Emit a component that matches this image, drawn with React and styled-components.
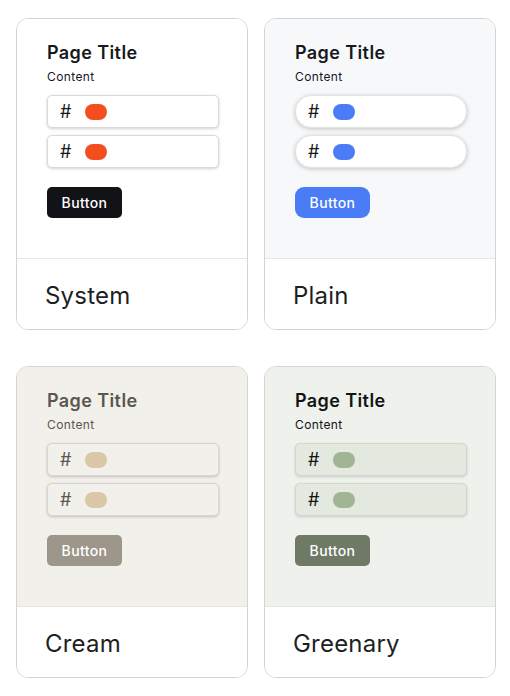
import React from "react";
import styled, { createGlobalStyle } from "styled-components";

const GlobalStyle = createGlobalStyle`
  body {
    margin: 0;
    background: #fff;
    font-family: Inter, "Noto Sans", sans-serif;
  }
`;

const themes = [
  {
    name: "System",
    bg: "#ffffff",
    text: "#16181c",
    inputBg: "#ffffff",
    inputBorder: "#d9d9d9",
    inputRadius: "5px",
    inputShadow: "0 1px 3px rgba(0, 0, 0, 0.18)",
    pill: "#f54e1e",
    button: "#111317",
    buttonRadius: "5px",
  },
  {
    name: "Plain",
    bg: "#f6f8fa",
    text: "#16181c",
    inputBg: "#ffffff",
    inputBorder: "#e4e4e4",
    inputRadius: "16px",
    inputShadow: "0 1px 4px rgba(0, 0, 0, 0.22)",
    pill: "#4a7cf6",
    button: "#4a7cf6",
    buttonRadius: "9px",
  },
  {
    name: "Cream",
    bg: "#f2f0eb",
    text: "#5a5650",
    inputBg: "#f2f0eb",
    inputBorder: "#d8d5cf",
    inputRadius: "5px",
    inputShadow: "0 1px 3px rgba(0, 0, 0, 0.2)",
    pill: "#d9c8a8",
    button: "#9d978b",
    buttonRadius: "5px",
  },
  {
    name: "Greenary",
    bg: "#eef1ec",
    text: "#121412",
    inputBg: "#e3e9df",
    inputBorder: "#d1d8cc",
    inputRadius: "5px",
    inputShadow: "0 1px 3px rgba(0, 0, 0, 0.16)",
    pill: "#a0b596",
    button: "#6e7a66",
    buttonRadius: "5px",
  },
];

const Grid = styled.div`
  display: grid;
  grid-template-columns: 232px 232px;
  column-gap: 16px;
  row-gap: 36px;
  padding: 18px 16px;
`;

const Card = styled.div`
  display: flex;
  flex-direction: column;
  height: 312px;
  box-sizing: border-box;
  border: 1px solid #d4d4d4;
  border-radius: 12px;
  overflow: hidden;
  background: #fff;
`;

const Preview = styled.div`
  height: 239px;
  box-sizing: border-box;
  padding: 23px 30px 0 30px;
  background: ${(p) => p.$t.bg};
  color: ${(p) => p.$t.text};
`;

const Title = styled.div`
  font-size: 18px;
  font-weight: 600;
  line-height: 22px;
  letter-spacing: 0.4px;
`;

const Content = styled.div`
  font-size: 12px;
  line-height: 16px;
  margin-top: 5px;
  letter-spacing: 0.4px;
`;

const Inputs = styled.div`
  display: flex;
  flex-direction: column;
  gap: 7px;
  margin-top: 10px;
`;

const Input = styled.div`
  display: flex;
  align-items: center;
  height: 33px;
  width: 172px;
  box-sizing: border-box;
  padding-left: 12px;
  gap: 14px;
  background: ${(p) => p.$t.inputBg};
  border: 1px solid ${(p) => p.$t.inputBorder};
  border-radius: ${(p) => p.$t.inputRadius};
  box-shadow: ${(p) => p.$t.inputShadow};
`;

const Hash = styled.span`
  font-size: 18px;
  line-height: 18px;
  font-weight: 400;
`;

const Pill = styled.span`
  width: 22px;
  height: 16px;
  border-radius: 8px;
  background: ${(p) => p.$t.pill};
`;

const Button = styled.div`
  display: inline-flex;
  align-items: center;
  justify-content: center;
  margin-top: 19px;
  width: 75px;
  height: 31px;
  border-radius: ${(p) => p.$t.buttonRadius};
  background: ${(p) => p.$t.button};
  color: #fff;
  font-size: 14px;
  font-weight: 500;
  letter-spacing: 0.4px;
`;

const Footer = styled.div`
  flex: 1;
  display: flex;
  align-items: center;
  padding: 3px 0 0 28px;
  border-top: 1px solid #e6e6e6;
  font-size: 24px;
  font-weight: 400;
  letter-spacing: 0.2px;
  color: #1d1f23;
  background: #fff;
`;

function ThemeCard({ t }) {
  return (
    <Card>
      <Preview $t={t}>
        <Title>Page Title</Title>
        <Content>Content</Content>
        <Inputs>
          <Input $t={t}>
            <Hash>#</Hash>
            <Pill $t={t} />
          </Input>
          <Input $t={t}>
            <Hash>#</Hash>
            <Pill $t={t} />
          </Input>
        </Inputs>
        <Button $t={t}>Button</Button>
      </Preview>
      <Footer>{t.name}</Footer>
    </Card>
  );
}

export default function App() {
  return (
    <>
      <GlobalStyle />
      <Grid>
        {themes.map((t) => (
          <ThemeCard key={t.name} t={t} />
        ))}
      </Grid>
    </>
  );
}
